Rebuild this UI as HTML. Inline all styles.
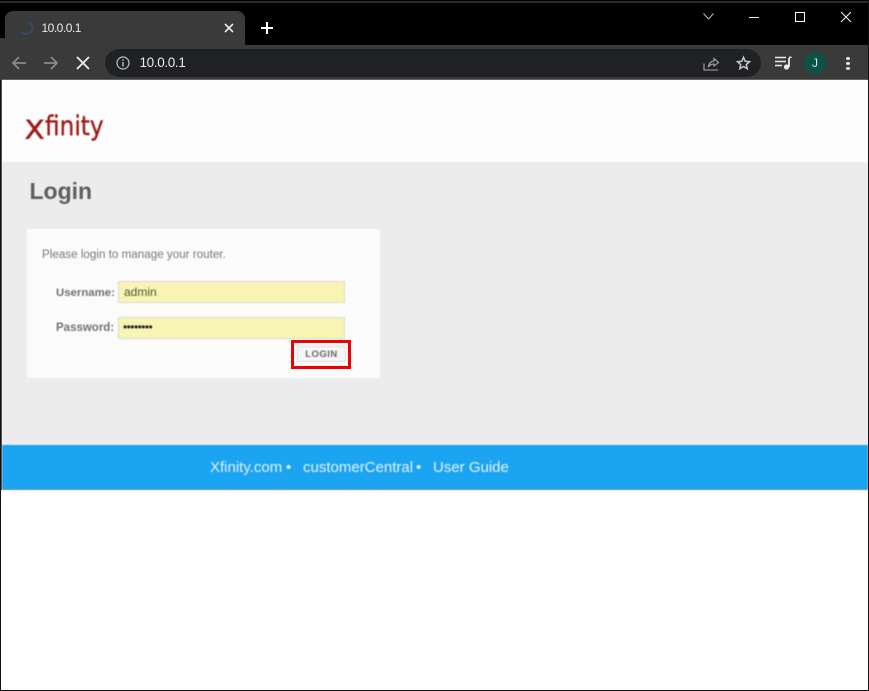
<!DOCTYPE html>
<html>
<head>
<meta charset="utf-8">
<style>
html,body{margin:0;padding:0;background:#fff;}
body{width:869px;height:691px;position:relative;overflow:hidden;font-family:"Liberation Sans",sans-serif;}
div,span{position:absolute;white-space:nowrap;}
svg{position:absolute;overflow:visible;}
</style>
</head>
<body>
<div style="left:0;top:0;width:869px;height:45px;background:#000"></div>
<div style="left:0;top:1px;width:869px;height:2px;background:#2a2a2a"></div>
<div style="left:0;top:45px;width:869px;height:35px;background:#3a3a3b"></div>
<div style="left:5px;top:11px;width:240px;height:36px;background:#3a3a3b;border-radius:8px 8px 0 0"></div>
<div style="left:0;top:38px;width:6px;height:8px;background:#3a3a3b"></div>
<svg style="left:19px;top:20px" width="16" height="16" viewBox="0 0 16 16"><path d="M8.500 1.500A6.300 6.300 0 1 1 2.500 12" fill="none" stroke="#34496e" stroke-width="1.800"/></svg>
<div style="left:41.500px;top:20px;font-size:12px;line-height:16px;letter-spacing:-.5px;color:#e8eaed">10.0.0.1</div>
<svg style="left:224px;top:23px" width="10" height="10" viewBox="0 0 10 10"><path d="M1 1L9 9M9 1L1 9" stroke="#e8eaed" stroke-width="1.600"/></svg>
<svg style="left:260px;top:21px" width="14" height="14" viewBox="0 0 14 14"><path d="M7 1V13M1 7H13" stroke="#fff" stroke-width="2"/></svg>
<svg style="left:703px;top:13px" width="11" height="7" viewBox="0 0 11 7"><path d="M.5 .5L5.500 6L10.500 .5" fill="none" stroke="#bbb" stroke-width="1"/></svg>
<div style="left:749px;top:17px;width:10px;height:1px;background:#eee"></div>
<div style="left:795px;top:12px;width:8px;height:8px;border:1.300px solid #fff"></div>
<svg style="left:841px;top:12px" width="10" height="10" viewBox="0 0 10 10"><path d="M0 0L10 10M10 0L0 10" stroke="#eee" stroke-width="1.100"/></svg>

<svg style="left:11px;top:55px" width="16" height="16" viewBox="0 0 16 16"><path d="M15 8H2M8 2L2 8L8 14" fill="none" stroke="#8a8b8d" stroke-width="1.700"/></svg>
<svg style="left:43px;top:55px" width="16" height="16" viewBox="0 0 16 16"><path d="M1 8H14M8 2L14 8L8 14" fill="none" stroke="#8a8b8d" stroke-width="1.700"/></svg>
<svg style="left:77px;top:57px" width="12" height="12" viewBox="0 0 12 12"><path d="M0 0L12 12M12 0L0 12" stroke="#eceded" stroke-width="1.800"/></svg>

<div style="left:105px;top:49px;width:656px;height:28px;background:#202124;border-radius:14px"></div>
<svg style="left:116px;top:56px" width="14" height="14" viewBox="0 0 14 14"><circle cx="7" cy="7" r="6" fill="none" stroke="#bdc1c6" stroke-width="1.200"/><path d="M7 6V10.500" stroke="#bdc1c6" stroke-width="1.400"/><path d="M7 3.300V4.800" stroke="#bdc1c6" stroke-width="1.400"/></svg>
<div style="left:139.500px;top:55px;font-size:13.500px;line-height:16px;letter-spacing:-.35px;color:#e8eaed">10.0.0.1</div>
<svg style="left:703px;top:56px" width="16" height="15" viewBox="0 0 16 15"><path d="M1 7.500V14H15M5.500 10.500C6 7 8.500 5 11 5V2.500L15.500 6.500L11 10V8C8.500 8 7 9 5.500 10.500Z" fill="none" stroke="#a9abae" stroke-width="1.100"/></svg>
<svg style="left:736px;top:56px" width="15" height="14" viewBox="0 0 15 14"><path d="M7.500 1.300L9.200 5.300L13.500 5.700L10.300 8.500L11.200 12.700L7.500 10.500L3.800 12.700L4.700 8.500L1.500 5.700L5.800 5.300Z" fill="none" stroke="#c4c6c8" stroke-width="1.500"/></svg>

<svg style="left:775px;top:56px" width="17" height="14" viewBox="0 0 17 14"><path d="M0 1.500H11M0 5.500H11M0 9.500H7" stroke="#e8eaed" stroke-width="1.500"/><path d="M14 2V11" stroke="#e8eaed" stroke-width="1.800"/><path d="M14 1.300H16.500" stroke="#e8eaed" stroke-width="1.500"/><circle cx="11.500" cy="11" r="2.600" fill="#e8eaed"/></svg>
<div style="left:804px;top:52px;width:22px;height:22px;border-radius:50%;background:#0b5345"></div>
<div style="left:804px;top:52px;width:22px;height:22px;line-height:22px;text-align:center;font-size:12px;color:#d5e8e2">J</div>
<div style="left:846px;top:57px;width:4px;height:3px;background:#e8eaed;border-radius:50%"></div>
<div style="left:846px;top:62px;width:4px;height:3px;background:#e8eaed;border-radius:50%"></div>
<div style="left:846px;top:67px;width:4px;height:3px;background:#e8eaed;border-radius:50%"></div>

<div style="left:0;top:0;width:869px;height:691px;filter:blur(.4px)">
<div style="left:2px;top:80px;width:866px;height:82px;background:#fdfdfd"></div>
<div style="left:2px;top:162px;width:866px;height:283px;background:#ececec"></div>
<div style="left:24px;top:107.500px;font-size:36px;line-height:40px;color:#a01c1c;font-family:'DejaVu Sans',sans-serif">x</div>
<div style="left:45px;top:108.700px;font-size:27px;line-height:36px;color:#a01c1c;font-family:'DejaVu Sans',sans-serif;-webkit-text-stroke:.4px #a01c1c;transform-origin:0 0;transform:scaleX(.86)">finity</div>
<div style="left:29.500px;top:177px;font-size:23px;line-height:28px;font-weight:bold;color:#5b5e62">Login</div>

<div style="left:27px;top:229px;width:353px;height:149px;background:#fbfbfb"></div>
<div style="left:42px;top:247px;font-size:11.650px;line-height:15px;color:#77797c">Please login to manage your router.</div>
<div style="left:56px;top:285.500px;font-size:11.400px;line-height:15px;font-weight:bold;color:#6f7174">Username:</div>
<div style="left:56px;top:320.500px;font-size:11.500px;line-height:15px;font-weight:bold;color:#6f7174">Password:</div>
<div style="left:118px;top:281px;width:225px;height:20px;background:#f7f4b4;border:1px solid #dcdcc8"></div>
<div style="left:118px;top:317px;width:225px;height:20px;background:#f7f4b4;border:1px solid #dcdcc8"></div>
<div style="left:124px;top:285px;font-size:12px;line-height:15px;color:#55552f">admin</div>
<div style="left:123px;top:320px;font-size:12px;line-height:15px;letter-spacing:-.55px;color:#222">••••••••</div>

<div style="left:297px;top:346px;width:49px;height:16px;background:#f7f7f7;border:1px solid #ddd;box-sizing:border-box"></div>
<div style="left:297px;top:347px;width:49px;height:16px;line-height:16px;text-align:center;font-size:9.500px;font-weight:bold;letter-spacing:.5px;color:#666">LOGIN</div>

<div style="left:2px;top:445px;width:866px;height:44px;background:#1ba4f1"></div>
<div style="left:2px;top:489px;width:866px;height:1px;background:#5d93b5"></div>
<div style="left:210px;top:459px;font-size:15px;line-height:17px;color:#e3f2fb">Xfinity.com</div>
<div style="left:286px;top:459px;font-size:15px;line-height:17px;color:#e3f2fb">•</div>
<div style="left:303px;top:459px;font-size:15px;line-height:17px;color:#e3f2fb">customerCentral</div>
<div style="left:416px;top:459px;font-size:15px;line-height:17px;color:#e3f2fb">•</div>
<div style="left:433px;top:459px;font-size:15px;line-height:17px;color:#e3f2fb">User Guide</div>
</div>

<div style="left:291px;top:340px;width:54px;height:23px;border:3px solid #f00000"></div>

<div style="left:0;top:80px;width:1px;height:611px;background:#111"></div>
<div style="left:1px;top:80px;width:1px;height:410px;background:#555"></div>
<div style="left:868px;top:0;width:1px;height:691px;background:#111"></div>
<div style="left:0;top:690px;width:869px;height:1px;background:#111"></div>
</body>
</html>
